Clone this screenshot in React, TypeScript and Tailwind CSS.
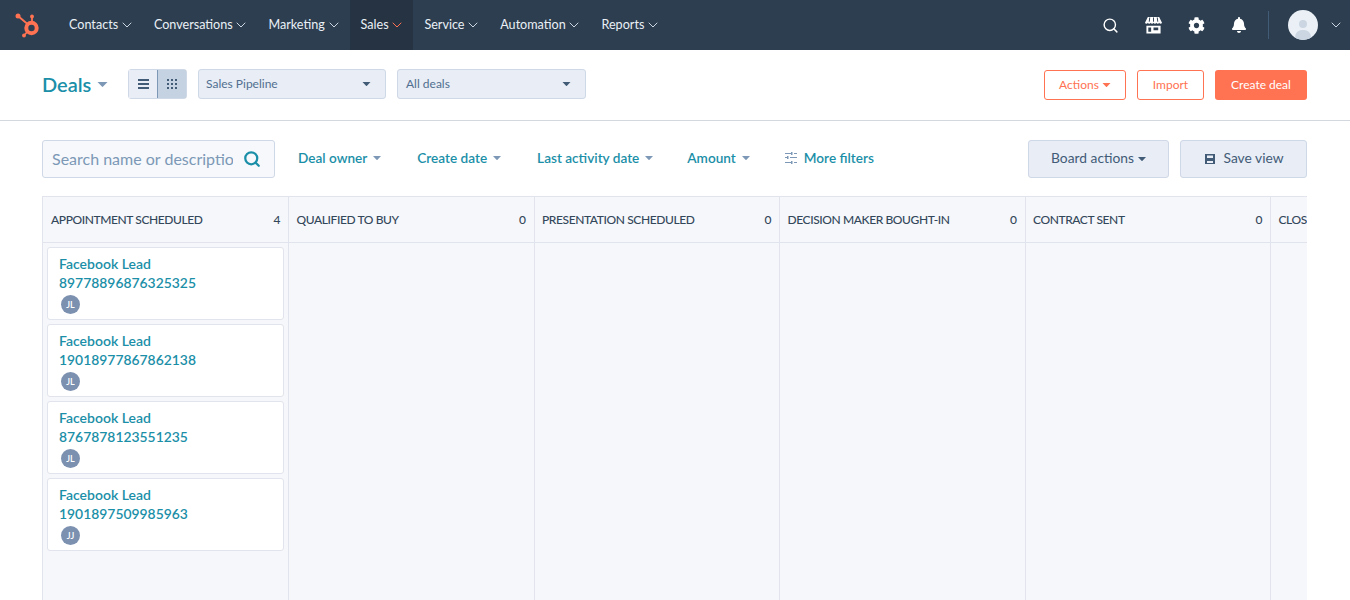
import { ChevronDown, Search } from "lucide-react";
import { FaBell, FaCog } from "react-icons/fa";

const navItems = ["Contacts", "Conversations", "Marketing", "Sales", "Service", "Automation", "Reports"];

const stages = [
  { name: "APPOINTMENT SCHEDULED", count: 4 },
  { name: "QUALIFIED TO BUY", count: 0 },
  { name: "PRESENTATION SCHEDULED", count: 0 },
  { name: "DECISION MAKER BOUGHT-IN", count: 0 },
  { name: "CONTRACT SENT", count: 0 },
  { name: "CLOSED WON", count: 0 },
];

const deals = [
  { id: "89778896876325325", owner: "JL" },
  { id: "19018977867862138", owner: "JL" },
  { id: "8767878123551235", owner: "JL" },
  { id: "1901897509985963", owner: "JJ" },
];

function Caret({ className = "" }: { className?: string }) {
  return (
    <svg viewBox="0 0 10 5" className={className} fill="currentColor">
      <path d="M0 0h10L5.600 4.600a.8.8 0 0 1-1.200 0z" />
    </svg>
  );
}

function Logo() {
  return (
    <svg viewBox="0 0 26 26" className="h-[26px] w-[26px] text-[#ff7252]" fill="none" stroke="currentColor">
      <circle cx="16.500" cy="16" r="5.200" strokeWidth="4" />
      <path d="M3 4l9.500 8M17 4.500V10M9 23.500l4-4.500" strokeWidth="1.800" />
      <circle cx="3" cy="4" r="2.500" fill="currentColor" stroke="none" />
      <circle cx="17" cy="4.500" r="1.900" fill="currentColor" stroke="none" />
      <circle cx="9" cy="23.500" r="1.900" fill="currentColor" stroke="none" />
    </svg>
  );
}

function StoreIcon() {
  return (
    <svg viewBox="0 0 18 18" className="h-[17px] w-[17px] text-white" fill="currentColor">
      <path d="M3 0h12l3 6.200a1.600 1.600 0 0 1-3 0 1.600 1.600 0 0 1-3 0 1.600 1.600 0 0 1-3 0 1.600 1.600 0 0 1-3 0 1.600 1.600 0 0 1-3 0 1.600 1.600 0 0 1-3 0z" />
      <path d="M1.500 9.200h15V17.500h-15zM3.500 11v4.700h3V11zM9 11v3h5v-3z" fillRule="evenodd" />
      <path d="M5 0.500L4.500 5M9 0.500V5M13 0.500L13.500 5" stroke="#2d3e50" strokeWidth="1" />
    </svg>
  );
}

function DealCard({ id, owner }: { id: string; owner: string }) {
  return (
    <div className="h-[73px] rounded-[3px] border border-[#e1e4ec] bg-white pl-[11px] pt-[6px]">
      <div className="text-[14px] font-semibold leading-[19px] text-[#1b8fa8]">
        Facebook Lead
        <br />
        <span className="text-[13.9px]">{id}</span>
      </div>
      <div className="ml-[2px] mt-[3px] flex h-[19px] w-[19px] items-center justify-center rounded-full bg-[#7c90b0] text-[9px] font-semibold text-white">
        {owner}
      </div>
    </div>
  );
}

function Filter({ label, gap }: { label: string; gap: string }) {
  return (
    <button className={`flex items-center gap-[6px] text-[13.6px] font-semibold text-[#1b8fa8] ${gap}`}>
      {label}
      <Caret className="h-[4px] w-[8px] text-[#7c98b6]" />
    </button>
  );
}

export default function App() {
  return (
    <div className="flex h-[600px] flex-col overflow-hidden bg-white font-['Lato',sans-serif]">
      <header className="flex h-[50px] shrink-0 items-center bg-[#2d3e50] pl-[15px] pr-[6px]">
        <Logo />
        <nav className="ml-[17px] flex h-full">
          {navItems.map((item) => {
            const active = item === "Sales";
            return (
              <a
                key={item}
                className={`flex h-full items-center gap-[3.75px] px-[11px] text-[12.6px] text-[#eaf0f6] ${active ? "bg-[#253342]" : ""}`}
              >
                {item}
                <ChevronDown
                  strokeWidth={1.5}
                  className={`-mx-[3px] h-[16px] w-[16px] ${active ? "text-[#ff7252]" : "text-[#cbd6e2]"}`}
                />
              </a>
            );
          })}
        </nav>
        <div className="ml-auto flex items-center">
          <Search className="h-[17px] w-[17px] text-white" strokeWidth={2} />
          <div className="ml-[26px]">
            <StoreIcon />
          </div>
          <FaCog className="ml-[26px] h-[17px] w-[17px] text-white" />
          <FaBell className="ml-[26px] h-[16px] w-[16px] text-white" />
          <div className="ml-[21px] h-[28px] w-px bg-[#425b76]" />
          <div className="relative ml-[19px] h-[30px] w-[30px] overflow-hidden rounded-full bg-[#eaf0f6]">
            <div className="absolute left-[11px] top-[10px] h-[8px] w-[8px] rounded-full bg-[#cbd6e2]" />
            <div className="absolute left-[7px] top-[20px] h-[14px] w-[16px] rounded-full bg-[#cbd6e2]" />
          </div>
          <ChevronDown strokeWidth={1.5} className="ml-[10px] h-[16px] w-[16px] text-[#cbd6e2]" />
        </div>
      </header>

      <section className="flex h-[71px] shrink-0 items-center border-b border-[#d3d8df] pl-[42px] pr-[43px]">
        <div className="mb-[2px] flex items-center">
          <div className="flex w-[86px] items-center gap-[6px] text-[20px] font-semibold text-[#1b8fa8]">
            Deals
            <Caret className="h-[5px] w-[11px] text-[#7c98b6]" />
          </div>
          <div className="flex h-[30px] rounded-[3px] border border-[#cfd8e6]">
            <div className="flex w-[28px] items-center justify-center bg-[#e8edf6]">
              <div className="flex flex-col gap-[2px]">
                <span className="h-[2px] w-[11px] bg-[#425b76]" />
                <span className="h-[2px] w-[11px] bg-[#425b76]" />
                <span className="h-[2px] w-[11px] bg-[#425b76]" />
              </div>
            </div>
            <div className="flex w-[29px] items-center justify-center border-l border-[#7c98b6] bg-[#c5d2e2]">
              <div className="grid grid-cols-3 gap-[2px]">
                {Array.from({ length: 9 }).map((_, i) => (
                  <span key={i} className="h-[2px] w-[2px] bg-[#425b76]" />
                ))}
              </div>
            </div>
          </div>
          <div className="ml-[11px] flex h-[30px] w-[188px] items-center justify-between rounded-[3px] border border-[#cfd8e6] bg-[#e8edf6] pl-[7px] pr-[14px] text-[12px] text-[#516f90]">
            Sales Pipeline
            <Caret className="h-[4px] w-[9px] text-[#425b76]" />
          </div>
          <div className="ml-[11px] flex h-[30px] w-[189px] items-center justify-between rounded-[3px] border border-[#cfd8e6] bg-[#e8edf6] pl-[8px] pr-[14px] text-[12px] text-[#516f90]">
            All deals
            <Caret className="h-[4px] w-[9px] text-[#425b76]" />
          </div>
        </div>
        <div className="ml-auto flex items-center gap-[11px] text-[12px]">
          <button className="flex h-[30px] w-[82px] items-center justify-center gap-[3px] rounded-[3px] border border-[#ff7252] text-[#ff7252]">
            Actions
            <Caret className="h-[4px] w-[9px]" />
          </button>
          <button className="h-[30px] w-[67px] rounded-[3px] border border-[#ff7252] text-[#ff7252]">Import</button>
          <button className="h-[30px] w-[92px] rounded-[3px] bg-[#ff7252] text-white">Create deal</button>
        </div>
      </section>

      <section className="flex h-[75px] shrink-0 items-center pl-[42px] pr-[43px]">
        <div className="flex h-[38px] w-[233px] items-center justify-between rounded-[3px] border border-[#cfd8e6] bg-[#f6f8fc] pl-[9px] pr-[13px]">
          <span className="w-[181px] overflow-hidden whitespace-nowrap text-[16px] leading-[22px] text-[#7c98b6]">
            Search name or description
          </span>
          <Search className="h-[18px] w-[18px] text-[#1b8fa8]" strokeWidth={3} />
        </div>
        <div className="ml-[23px] flex items-center">
          <Filter label="Deal owner" gap="mr-[36px]" />
          <Filter label="Create date" gap="mr-[36px]" />
          <Filter label="Last activity date" gap="mr-[34px]" />
          <Filter label="Amount" gap="mr-[35px]" />
          <button className="flex items-center gap-[7px] text-[13.6px] font-semibold text-[#1b8fa8]">
            <svg viewBox="0 0 12 12" className="h-[12px] w-[12px] text-[#7c98b6]" fill="currentColor">
              <path d="M0 1h6V0h1.500v3H6V2H0zM9 1h3v1H9zM0 5h2V4h1.500v3H2V6H0zM5 5h7v1H5zM0 10h6V9h1.500v3H6v-1H0zM9 10h3v1H9z" />
            </svg>
            More filters
          </button>
        </div>
        <div className="ml-auto flex items-center gap-[11px] text-[13.8px] text-[#425b76]">
          <button className="flex h-[38px] w-[141px] items-center justify-center gap-[4px] rounded-[3px] border border-[#cfd8e6] bg-[#e8edf6]">
            Board actions
            <Caret className="h-[4px] w-[8px]" />
          </button>
          <button className="flex h-[38px] w-[127px] items-center justify-center gap-[8px] rounded-[3px] border border-[#cfd8e6] bg-[#e8edf6]">
            <svg viewBox="0 0 12 12" className="h-[12px] w-[12px]" fill="currentColor">
              <path fillRule="evenodd" d="M1 1h10v10H1zM3 2.500v2.500h6V2.500zM3 8v2h6V8z" />
            </svg>
            Save view
          </button>
        </div>
      </section>

      <section className="ml-[42px] mr-[43px] flex min-h-0 flex-1 overflow-hidden border-l border-t border-[#e1e4ec] bg-[#f6f7fa]">
        {stages.map((stage, i) => (
          <div
            key={stage.name}
            className={`flex shrink-0 flex-col border-r border-[#e1e4ec] ${i === 0 ? "w-[246px]" : "w-[245.5px]"}`}
          >
            <div
              className={`flex h-[46px] shrink-0 items-center justify-between whitespace-nowrap border-b border-[#e1e4ec] pr-[8px] text-[12px] font-medium tracking-[-0.4px] text-[#33475b] ${i === 0 ? "pl-[8px]" : "pl-[7.5px]"}`}
            >
              <span>{stage.name}</span>
              <span>{stage.count}</span>
            </div>
            {i === 0 && (
              <div className="flex flex-col gap-[4px] px-[4px] pt-[4px]">
                {deals.map((deal) => (
                  <DealCard key={deal.id} id={deal.id} owner={deal.owner} />
                ))}
              </div>
            )}
          </div>
        ))}
      </section>
    </div>
  );
}
